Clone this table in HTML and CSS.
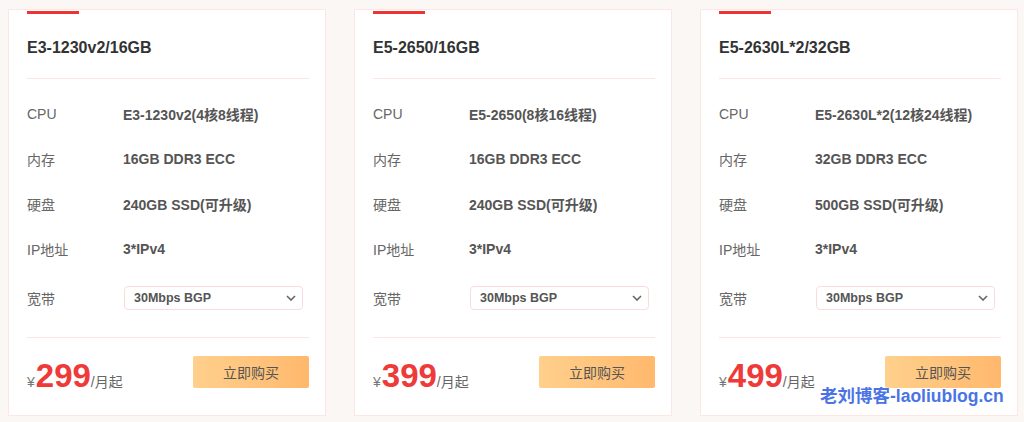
FILE: index.html
```html
<!DOCTYPE html>
<html lang="zh-CN">
<head>
<meta charset="utf-8">
<title>服务器套餐</title>
<link rel="stylesheet" href="styles.css">
</head>
<body>
<div class="plans">
  <div class="card">
    <div class="accent"></div>
    <h3 class="title">E3-1230v2/16GB</h3>
    <ul class="specs">
      <li class="spec"><span class="label">CPU</span><span class="value">E3-1230v2(4核8线程)</span></li>
      <li class="spec"><span class="label">内存</span><span class="value">16GB DDR3 ECC</span></li>
      <li class="spec"><span class="label">硬盘</span><span class="value">240GB SSD(可升级)</span></li>
      <li class="spec"><span class="label">IP地址</span><span class="value">3*IPv4</span></li>
      <li class="spec spec-select"><span class="label">宽带</span>
        <div class="select"><span>30Mbps BGP</span><svg class="chev" width="10" height="6" viewBox="0 0 10 6"><path d="M1 1l4 4 4-4" fill="none" stroke="#666" stroke-width="1.6"/></svg></div>
      </li>
    </ul>
    <div class="foot">
      <div class="price"><span class="yen">¥</span><span class="num">299</span><span class="unit">/月起</span></div>
      <button class="buy">立即购买</button>
    </div>
  </div>
  <div class="card">
    <div class="accent"></div>
    <h3 class="title">E5-2650/16GB</h3>
    <ul class="specs">
      <li class="spec"><span class="label">CPU</span><span class="value">E5-2650(8核16线程)</span></li>
      <li class="spec"><span class="label">内存</span><span class="value">16GB DDR3 ECC</span></li>
      <li class="spec"><span class="label">硬盘</span><span class="value">240GB SSD(可升级)</span></li>
      <li class="spec"><span class="label">IP地址</span><span class="value">3*IPv4</span></li>
      <li class="spec spec-select"><span class="label">宽带</span>
        <div class="select"><span>30Mbps BGP</span><svg class="chev" width="10" height="6" viewBox="0 0 10 6"><path d="M1 1l4 4 4-4" fill="none" stroke="#666" stroke-width="1.6"/></svg></div>
      </li>
    </ul>
    <div class="foot">
      <div class="price"><span class="yen">¥</span><span class="num">399</span><span class="unit">/月起</span></div>
      <button class="buy">立即购买</button>
    </div>
  </div>
  <div class="card">
    <div class="accent"></div>
    <h3 class="title">E5-2630L*2/32GB</h3>
    <ul class="specs">
      <li class="spec"><span class="label">CPU</span><span class="value">E5-2630L*2(12核24线程)</span></li>
      <li class="spec"><span class="label">内存</span><span class="value">32GB DDR3 ECC</span></li>
      <li class="spec"><span class="label">硬盘</span><span class="value">500GB SSD(可升级)</span></li>
      <li class="spec"><span class="label">IP地址</span><span class="value">3*IPv4</span></li>
      <li class="spec spec-select"><span class="label">宽带</span>
        <div class="select"><span>30Mbps BGP</span><svg class="chev" width="10" height="6" viewBox="0 0 10 6"><path d="M1 1l4 4 4-4" fill="none" stroke="#666" stroke-width="1.6"/></svg></div>
      </li>
    </ul>
    <div class="foot">
      <div class="price"><span class="yen">¥</span><span class="num">499</span><span class="unit">/月起</span></div>
      <button class="buy">立即购买</button>
    </div>
  </div>
</div>
<div class="watermark">老刘博客-laoliublog.cn</div>
</body>
</html>
```
FILE: styles.css
```css
* { box-sizing: border-box; }
html, body { margin: 0; padding: 0; }
body {
  background: #faf7f4;
  font-family: "Liberation Sans", "Noto Sans CJK SC", sans-serif;
  color: #555;
  position: relative;
  width: 1024px;
  height: 422px;
  overflow: hidden;
}
.plans {
  display: grid;
  grid-template-columns: repeat(3, 318px);
  column-gap: 28px;
  padding: 9px 0 0 8px;
}
.card {
  background: #fff;
  border: 1px solid #fde6e4;
  height: 407px;
  padding: 0 16px 0 18px;
  display: flex;
  flex-direction: column;
}
.accent {
  width: 52px;
  height: 3px;
  margin-top: 1px;
  background: #ec3434;
}
.title {
  margin: 0;
  padding: 22px 0 18px;
  font-size: 16px;
  line-height: 24px;
  font-weight: bold;
  color: #333;
  border-bottom: 1px solid #fde3e1;
}
.specs {
  list-style: none;
  margin: 0;
  padding: 12px 0 13px;
  border-bottom: 1px solid #fde3e1;
}
.spec {
  display: flex;
  align-items: center;
  height: 45px;
  font-size: 14px;
}
.spec-select { height: 53px; }
.label {
  width: 96px;
  flex: none;
  color: #666;
}
.value {
  font-weight: bold;
  color: #555;
}
.select {
  width: 179px;
  height: 24px;
  margin-left: 1px;
  border: 1px solid #fbdcdc;
  border-radius: 4px;
  display: flex;
  align-items: center;
  justify-content: space-between;
  padding: 0 6px 0 9px;
  font-size: 12.5px;
  font-weight: bold;
  color: #555;
}
.chev { display: block; }
.foot {
  display: flex;
  justify-content: space-between;
  align-items: flex-end;
  padding-top: 18px;
}
.price {
  display: flex;
  align-items: baseline;
  margin-bottom: -4px;
  line-height: 1;
}
.yen {
  font-size: 14px;
  color: #777;
}
.num {
  font-size: 33px;
  font-weight: bold;
  color: #ef3a3a;
  margin-left: 1px;
}
.unit {
  font-size: 14px;
  color: #666;
}
.buy {
  width: 116px;
  height: 32px;
  border: 0;
  border-radius: 2px;
  background: linear-gradient(90deg, #ffd08c, #ffb86d);
  font-family: "Liberation Sans", "Noto Sans CJK SC", sans-serif;
  font-size: 14px;
  color: #555;
  padding: 0;
}
.watermark {
  position: absolute;
  left: 820px;
  top: 382px;
  font-size: 17.5px;
  font-weight: bold;
  color: #4a74e6;
  white-space: nowrap;
  text-shadow: 0 0 2px #fff;
}
```
